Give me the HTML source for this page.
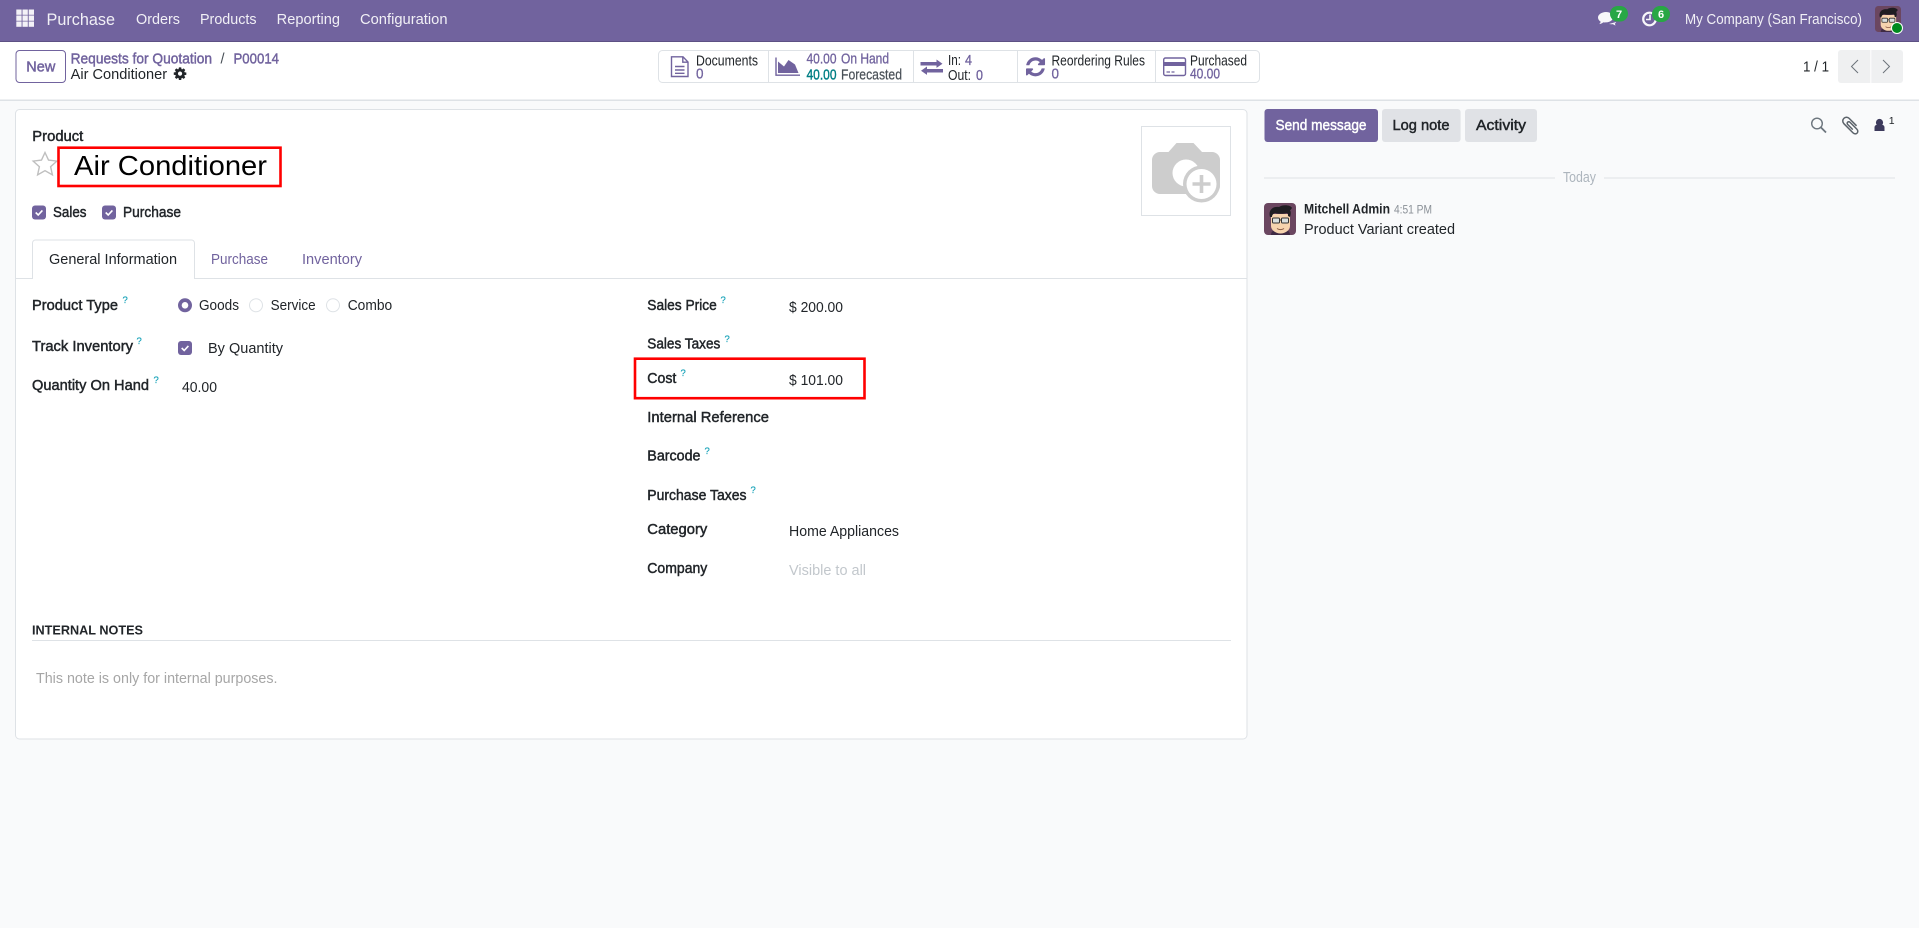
<!DOCTYPE html>
<html lang="en"><head><meta charset="utf-8"><title>Air Conditioner</title>
<style>
html,body{margin:0;padding:0;background:#f9fafb;width:1919px;height:928px;overflow:hidden}
svg{display:block}
text{font-family:"Liberation Sans",sans-serif;font-size:14.500px;fill:#212529;white-space:pre}
.m{stroke:#212529;stroke-width:.45}
.p{fill:#71639e;stroke:#71639e;stroke-width:.3}
.pm{fill:#71639e;stroke:#71639e;stroke-width:.45}
.n{fill:#fff;fill-opacity:.9}
.q{fill:#17a2b8;font-size:9.500px;stroke:#17a2b8;stroke-width:.2}
</style></head><body>
<svg width="1919" height="928" viewBox="0 0 1919 928" xmlns="http://www.w3.org/2000/svg">
<rect width="1919" height="928" fill="#f9fafb"/>
<!-- navbar -->
<rect width="1919" height="42" fill="#71639e"/>
<rect y="41" width="1919" height="1" fill="#5d5184"/>
<g fill="#f3f1f7">
<rect x="16.300" y="9.500" width="5.300" height="5.300"/><rect x="22.500" y="9.500" width="5.300" height="5.300"/><rect x="28.700" y="9.500" width="5.300" height="5.300"/>
<rect x="16.300" y="15.500" width="5.300" height="5.300"/><rect x="22.500" y="15.500" width="5.300" height="5.300"/><rect x="28.700" y="15.500" width="5.300" height="5.300"/>
<rect x="16.300" y="21.500" width="5.300" height="5.300"/><rect x="22.500" y="21.500" width="5.300" height="5.300"/><rect x="28.700" y="21.500" width="5.300" height="5.300"/>
</g>
<text class="n" x="46.500" y="25" style="font-size:17px" textLength="68.500" lengthAdjust="spacingAndGlyphs">Purchase</text>
<text class="n" x="136" y="24" textLength="44" lengthAdjust="spacingAndGlyphs">Orders</text>
<text class="n" x="200" y="24" textLength="56.500" lengthAdjust="spacingAndGlyphs">Products</text>
<text class="n" x="276.700" y="24" textLength="63.300" lengthAdjust="spacingAndGlyphs">Reporting</text>
<text class="n" x="360" y="24" textLength="87.500" lengthAdjust="spacingAndGlyphs">Configuration</text>
<!-- comments icon -->
<path d="M1606 12c-4.400 0-8 2.500-8 5.500 0 1.800 1.100 3.200 2.700 4.200-.2.900-.8 1.700-1.500 2.400 1.600-.2 3-.9 4-1.700.9.100 1.800.100 2.800 0 4.400-.2 7-2.500 7-5 0-3-3-5.400-7-5.400z" fill="#fff" fill-opacity=".95"/>
<path d="M1609 24c1.500.3 3 .2 4 .1 .8.700 1.700 1.100 2.700 1.300-.5-.6-.8-1.200-.9-1.800 .7-.5 1.200-1 1.400-1.600z" fill="#fff" fill-opacity=".95"/>
<rect x="1610" y="6" width="18" height="15.500" rx="7.700" fill="#28a745"/>
<text x="1619" y="18" text-anchor="middle" style="font-size:11px;fill:#fff;font-weight:700">7</text>
<!-- activity icon -->
<circle cx="1649.500" cy="19" r="6.300" fill="none" stroke="#fff" stroke-opacity=".95" stroke-width="2.200"/>
<path d="M1650 14.500v5h-4" fill="none" stroke="#fff" stroke-opacity=".95" stroke-width="1.600"/>
<rect x="1652" y="6" width="18" height="16" rx="8" fill="#28a745"/>
<text x="1661" y="18" text-anchor="middle" style="font-size:11px;fill:#fff;font-weight:700">6</text>
<text class="n" x="1685" y="24" textLength="177" lengthAdjust="spacingAndGlyphs">My Company (San Francisco)</text>
<!-- nav avatar -->
<g transform="translate(1875 6) scale(.8125)">
<rect width="32" height="32" rx="4" fill="#6b4660"/>
<path d="M7 32c0-3 2-5 5-5h9c3 0 5 2 5 5z" fill="#3f2b44"/>
<path d="M7 11h19v12c0 4-4.500 7.500-9.500 7.500S7 27 7 23z" fill="#f6d3ae"/>
<path d="M6 14C4 7 9 3 15 4c4-3 12-2 13 1-1 1-1 2-2 2 1 2 1 4 0 7l-2-1c0-2 0-2-1-3-4 1-9 1-12 0-2 1-3 2-3 4z" fill="#1f1d22"/>
<rect x="8.500" y="15" width="7" height="5" rx="1" fill="#d9dedd" stroke="#333" stroke-width="1"/>
<rect x="17.500" y="15" width="7" height="5" rx="1" fill="#d9dedd" stroke="#333" stroke-width="1"/>
<path d="M15.500 17h2" stroke="#333"/><path d="M13 25.500c2 1.500 5 1.500 7 0" stroke="#8a5a44" fill="none"/>
</g>
<circle cx="1897" cy="28" r="5.500" fill="#008a1e" stroke="#fff" stroke-width="1"/>
<!-- control panel -->
<rect y="42" width="1919" height="58" fill="#fff"/>
<rect y="99.500" width="1919" height="1.500" fill="#dee2e6"/>
<rect x="16" y="50.500" width="49.500" height="32" rx="3.500" fill="#fff" stroke="#71639e"/>
<text class="pm" x="26.300" y="71.300" textLength="29" lengthAdjust="spacingAndGlyphs">New</text>
<text class="pm" x="70.600" y="63.500" textLength="141.500" lengthAdjust="spacingAndGlyphs">Requests for Quotation</text>
<text x="220.500" y="63.500" style="fill:#495057">/</text>
<text class="pm" x="233.500" y="63.500" textLength="45.500" lengthAdjust="spacingAndGlyphs">P00014</text>
<text x="70.600" y="79" textLength="96.500" lengthAdjust="spacingAndGlyphs">Air Conditioner</text>
<path transform="translate(172.700 66.300) scale(.0082)" fill="#212529" fill-rule="evenodd" d="M1152 896q0-106-75-181t-181-75-181 75-75 181 75 181 181 75 181-75 75-181zm512-109v222q0 12-8 23t-20 13l-185 28q-19 54-39 91 35 50 107 138 10 12 10 25t-9 23q-27 37-99 108t-94 71q-12 0-26-9l-138-108q-44 23-91 38-16 136-29 186-7 28-36 28h-222q-14 0-24.500-8.500t-11.500-21.500l-28-184q-49-16-90-37l-141 107q-10 9-25 9-14 0-25-11-126-114-165-168-7-10-7-23 0-12 8-23 15-21 51-66.500t54-70.500q-27-50-41-99l-183-27q-13-2-21-12.500t-8-23.500v-222q0-12 8-23t19-13l186-28q14-46 39-92-40-57-107-138-10-12-10-24 0-10 9-23 26-36 98.500-107.500t94.500-71.500q13 0 26 10l138 107q44-23 91-38 16-136 29-186 7-28 36-28h222q14 0 24.500 8.500t11.500 21.500l28 184q49 16 90 37l142-107q9-9 24-9 13 0 25 10 129 119 165 170 7 8 7 22 0 12-8 23-15 21-51 66.500t-54 70.500q26 50 41 98l183 28q13 2 21 12.500t8 23.500z"/>
<!-- stat buttons -->
<rect x="658.500" y="50.500" width="601" height="32" rx="4" fill="#fff" stroke="#dee2e6"/>
<path d="M768.500 51v31M913.500 51v31M1017.500 51v31M1155.500 51v31" stroke="#dee2e6"/>
<path d="M671.500 56.800H683l5 5.200V76.500H671.500z M682.800 56.800V62.200H688 M675 66.500h9.500M675 70h9.500M675 73.300h9.500" fill="none" stroke="#71639e" stroke-width="1.400"/>
<text x="696" y="65.500" textLength="62" lengthAdjust="spacingAndGlyphs">Documents</text>
<text class="p" x="696" y="78.300" textLength="7.500" lengthAdjust="spacingAndGlyphs">0</text>
<path d="M776 57.500V75.200H800" fill="none" stroke="#71639e" stroke-width="1.400"/>
<path d="M778 73V61.500L784 66.500 788.500 60 795 64.500 798.500 73z" fill="#71639e"/>
<text class="p" x="806.500" y="63.500" textLength="30" lengthAdjust="spacingAndGlyphs">40.00</text>
<text class="p" x="841" y="63.500" textLength="48" lengthAdjust="spacingAndGlyphs">On Hand</text>
<text x="806.500" y="79.500" textLength="30" lengthAdjust="spacingAndGlyphs" style="fill:#017e84" stroke="#017e84" stroke-width=".4">40.00</text>
<text x="841" y="79.500" textLength="61" lengthAdjust="spacingAndGlyphs" style="fill:#495057;stroke:#495057;stroke-width:.2">Forecasted</text>
<path d="M920.500 62h16v-2.500l6 4.200-6 4.200V65.500h-16zM943 69h-16v-2.500l-6 4.200 6 4.200V72.500h16z" fill="#71639e"/>
<text x="948" y="65" textLength="13" lengthAdjust="spacingAndGlyphs">In:</text>
<text class="p" x="965" y="65" textLength="7" lengthAdjust="spacingAndGlyphs">4</text>
<text x="948" y="80" textLength="23" lengthAdjust="spacingAndGlyphs">Out:</text>
<text class="p" x="976" y="80" textLength="7" lengthAdjust="spacingAndGlyphs">0</text>
<path transform="translate(1024.400 55.700) scale(.0124)" fill="#71639e" d="M1639 1056q0 5-1 7-64 268-268 434.500t-478 166.500q-146 0-282.500-55t-243.500-157l-129 129q-19 19-45 19t-45-19-19-45v-448q0-26 19-45t45-19h448q26 0 45 19t19 45-19 45l-137 137q71 66 161 102t187 36q134 0 250-65t186-179q11-17 53-117 8-23 30-23h192q13 0 22.500 9.500t9.500 22.500zm25-800v448q0 26-19 45t-45 19h-448q-26 0-45-19t-19-45 19-45l138-138q-148-137-349-137-134 0-250 65t-186 179q-11 17-53 117-8 23-30 23h-199q-13 0-22.500-9.500t-9.500-22.500v-7q65-268 270-434.500t480-166.500q146 0 284 55.500t245 156.500l130-129q19-19 45-19t45 19 19 45z"/>
<text x="1051.500" y="65.500" textLength="93.500" lengthAdjust="spacingAndGlyphs">Reordering Rules</text>
<text class="p" x="1051.500" y="78.300" textLength="7.500" lengthAdjust="spacingAndGlyphs">0</text>
<rect x="1163.700" y="58" width="21.800" height="17.500" rx="1.800" fill="none" stroke="#71639e" stroke-width="1.400"/>
<rect x="1163.700" y="62" width="21.800" height="4" fill="#71639e"/>
<path d="M1166.500 72h3.500M1171.500 72h3" stroke="#71639e" stroke-width="1.300"/>
<text x="1190" y="65.500" textLength="57" lengthAdjust="spacingAndGlyphs">Purchased</text>
<text class="p" x="1190" y="78.300" textLength="30" lengthAdjust="spacingAndGlyphs">40.00</text>
<text x="1803" y="71.500" textLength="26" lengthAdjust="spacingAndGlyphs">1 / 1</text>
<rect x="1838" y="50" width="65" height="33" rx="3" fill="#eff0f1"/>
<rect x="1870.300" y="50" width="1" height="33" fill="#fff"/>
<path d="M1858 60l-6.500 6.500 6.500 6.500M1883 60l6.500 6.500-6.500 6.500" fill="none" stroke="#6c737a" stroke-width="1"/>
<!-- sheet -->
<rect x="15.500" y="109.500" width="1231.500" height="629.500" rx="4" fill="#fff" stroke="#dee2e6"/>
<text class="m" x="32.300" y="141" textLength="51" lengthAdjust="spacingAndGlyphs">Product</text>
<path d="M45 152.500l3.500 7.600 8.300 1-6.200 5.600 1.800 8.200-7.400-4.200-7.400 4.200 1.800-8.200-6.200-5.600 8.300-1z" fill="none" stroke="#bfbfbf" stroke-width="1.400"/>
<text x="74" y="175" style="font-size:28px;fill:#000" textLength="193" lengthAdjust="spacingAndGlyphs">Air Conditioner</text>
<rect x="58.500" y="147.700" width="222" height="38.300" fill="none" stroke="#f00" stroke-width="2.600"/>
<!-- image -->
<rect x="1141.500" y="126.500" width="89" height="89" fill="#fff" stroke="#dee2e6"/>
<path d="M1160 152h8.500l8-9h17l8.500 9h10a8 8 0 0 1 8 8v26a8 8 0 0 1-8 8h-52a8 8 0 0 1-8-8v-26a8 8 0 0 1 8-8z" fill="#cdcdcd"/>
<circle cx="1186" cy="173" r="13.500" fill="#fff"/>
<circle cx="1201.500" cy="184" r="18.500" fill="#cdcdcd"/>
<circle cx="1201.500" cy="184" r="15" fill="#fff"/>
<path d="M1201.500 175v18M1192.500 184h18" stroke="#cdcdcd" stroke-width="3.600"/>
<!-- sales / purchase checks -->
<rect x="32" y="205.500" width="14" height="14" rx="3" fill="#71639e"/><path d="M35.700 212.500l2.500 2.500 4.200-4.600" fill="none" stroke="#fff" stroke-width="1.600"/>
<text class="m" x="53" y="217" textLength="33.500" lengthAdjust="spacingAndGlyphs">Sales</text>
<rect x="102" y="205.500" width="14" height="14" rx="3" fill="#71639e"/><path d="M105.700 212.500l2.500 2.500 4.200-4.600" fill="none" stroke="#fff" stroke-width="1.600"/>
<text class="m" x="123" y="217" textLength="58" lengthAdjust="spacingAndGlyphs">Purchase</text>
<!-- tabs -->
<path d="M16 278.500H32.500V243a3 3 0 0 1 3-3H191.500a3 3 0 0 1 3 3v35.500H1247" fill="#fff" stroke="#dee2e6"/>
<text x="49" y="264" textLength="128" lengthAdjust="spacingAndGlyphs">General Information</text>
<text class="p" x="211" y="264" textLength="57" lengthAdjust="spacingAndGlyphs" style="stroke-width:0">Purchase</text>
<text class="p" x="302" y="264" textLength="60" lengthAdjust="spacingAndGlyphs" style="stroke-width:0">Inventory</text>
<!-- left col -->
<text class="m" x="32" y="310" textLength="86" lengthAdjust="spacingAndGlyphs">Product Type</text><text class="q" x="122.500" y="303">?</text>
<circle cx="185" cy="305.300" r="7" fill="#71639e"/><circle cx="185" cy="305.300" r="3.300" fill="#fff"/>
<text x="199" y="310" textLength="40" lengthAdjust="spacingAndGlyphs">Goods</text>
<circle cx="256" cy="305.300" r="6.500" fill="#fff" stroke="#dee2e6"/>
<text x="270.600" y="310" textLength="45" lengthAdjust="spacingAndGlyphs">Service</text>
<circle cx="333" cy="305.300" r="6.500" fill="#fff" stroke="#dee2e6"/>
<text x="347.700" y="310" textLength="44.500" lengthAdjust="spacingAndGlyphs">Combo</text>
<text class="m" x="32" y="351" textLength="101" lengthAdjust="spacingAndGlyphs">Track Inventory</text><text class="q" x="136.500" y="344">?</text>
<rect x="178" y="341" width="14" height="14" rx="3" fill="#71639e"/><path d="M181.700 348l2.500 2.500 4.200-4.600" fill="none" stroke="#fff" stroke-width="1.600"/>
<text x="208" y="353" textLength="75" lengthAdjust="spacingAndGlyphs">By Quantity</text>
<text class="m" x="32" y="390" textLength="117" lengthAdjust="spacingAndGlyphs">Quantity On Hand</text><text class="q" x="153.500" y="383">?</text>
<text x="182" y="392" textLength="35" lengthAdjust="spacingAndGlyphs">40.00</text>
<!-- right col -->
<text class="m" x="647.300" y="310" textLength="69.500" lengthAdjust="spacingAndGlyphs">Sales Price</text><text class="q" x="720.500" y="303">?</text>
<text x="789" y="312" textLength="54" lengthAdjust="spacingAndGlyphs">$ 200.00</text>
<text class="m" x="647.300" y="348.700" textLength="73" lengthAdjust="spacingAndGlyphs">Sales Taxes</text><text class="q" x="724.500" y="342">?</text>
<text class="m" x="647.300" y="383" textLength="29" lengthAdjust="spacingAndGlyphs">Cost</text><text class="q" x="680.500" y="376">?</text>
<text x="789" y="385" textLength="54" lengthAdjust="spacingAndGlyphs">$ 101.00</text>
<rect x="635" y="358.700" width="229.500" height="39.500" fill="none" stroke="#f00" stroke-width="2.600"/>
<text class="m" x="647.300" y="422" textLength="121.700" lengthAdjust="spacingAndGlyphs">Internal Reference</text>
<text class="m" x="647.300" y="460.700" textLength="53.200" lengthAdjust="spacingAndGlyphs">Barcode</text><text class="q" x="704.500" y="454">?</text>
<text class="m" x="647.300" y="500" textLength="99.200" lengthAdjust="spacingAndGlyphs">Purchase Taxes</text><text class="q" x="750.500" y="493">?</text>
<text class="m" x="647.300" y="534" textLength="60" lengthAdjust="spacingAndGlyphs">Category</text>
<text x="789" y="536" textLength="110" lengthAdjust="spacingAndGlyphs">Home Appliances</text>
<text class="m" x="647.300" y="573" textLength="60" lengthAdjust="spacingAndGlyphs">Company</text>
<text x="789" y="575" style="fill:#c2c7cc" textLength="77" lengthAdjust="spacingAndGlyphs">Visible to all</text>
<!-- notes -->
<text x="32" y="634.500" style="font-size:13px;font-weight:700" textLength="111" lengthAdjust="spacingAndGlyphs">INTERNAL NOTES</text>
<rect x="32" y="640" width="1199" height="1" fill="#dee2e6"/>
<text x="36" y="683" style="fill:#a6a6a6" textLength="241.500" lengthAdjust="spacingAndGlyphs">This note is only for internal purposes.</text>
<!-- chatter -->
<rect x="1264.500" y="109" width="113.500" height="33" rx="3" fill="#71639e"/>
<text x="1275.500" y="130" style="fill:#fff;stroke:#fff;stroke-width:.45" textLength="91" lengthAdjust="spacingAndGlyphs">Send message</text>
<rect x="1382" y="109" width="78.600" height="33" rx="3" fill="#e0e2e6"/>
<text class="m" x="1392.500" y="130" textLength="57" lengthAdjust="spacingAndGlyphs">Log note</text>
<rect x="1465" y="109" width="72" height="33" rx="3" fill="#e0e2e6"/>
<text class="m" x="1476" y="130" textLength="50" lengthAdjust="spacingAndGlyphs">Activity</text>
<circle cx="1817" cy="123.500" r="5.300" fill="none" stroke="#6c757d" stroke-width="1.400"/><path d="M1821 127.500l5 5" stroke="#6c757d" stroke-width="1.800"/>
<path transform="translate(1839.700 115) scale(.0118)" fill="#5c636a" d="M1596 1385q0 117-79 196t-196 79q-135 0-235-100l-777-776q-113-115-113-271 0-159 110-270t269-111q158 0 273 113l605 606q10 10 10 22 0 16-30.500 46.500t-46.500 30.500q-13 0-23-10l-606-607q-79-77-181-77-106 0-179 75t-73 181q0 105 76 181l776 777q63 63 145 63 64 0 106-42t42-106q0-82-63-145l-581-581q-26-24-60-24-29 0-48 19t-19 48q0 32 25 59l410 410q10 10 10 22 0 16-31 47t-47 31q-12 0-22-10l-410-410q-63-61-63-149 0-82 57-139t139-57q88 0 149 63l581 581q100 98 100 235z"/>
<circle cx="1879.500" cy="122.500" r="3.600" fill="#3d3a5c"/><path d="M1874.500 131v-3.500c0-2 1.500-2.800 3-2.800h4c1.500 0 3 .8 3 2.800V131z" fill="#3d3a5c"/>
<text x="1888.700" y="124" style="font-size:10.500px">1</text>
<rect x="1264" y="177.500" width="291" height="1" fill="#dee2e6"/>
<rect x="1604" y="177.500" width="291" height="1" fill="#dee2e6"/>
<text x="1563" y="182" style="fill:#adb5bd" textLength="33" lengthAdjust="spacingAndGlyphs">Today</text>
<g transform="translate(1264 203)">
<rect width="32" height="32" rx="4" fill="#6b4660"/>
<path d="M7 32c0-3 2-5 5-5h9c3 0 5 2 5 5z" fill="#3f2b44"/>
<path d="M7 11h19v12c0 4-4.500 7.500-9.500 7.500S7 27 7 23z" fill="#f6d3ae"/>
<path d="M6 14C4 7 9 3 15 4c4-3 12-2 13 1-1 1-1 2-2 2 1 2 1 4 0 7l-2-1c0-2 0-2-1-3-4 1-9 1-12 0-2 1-3 2-3 4z" fill="#1f1d22"/>
<rect x="8.500" y="15" width="7" height="5" rx="1" fill="#d9dedd" stroke="#333" stroke-width="1"/>
<rect x="17.500" y="15" width="7" height="5" rx="1" fill="#d9dedd" stroke="#333" stroke-width="1"/>
<path d="M15.500 17h2" stroke="#333"/><path d="M13 25.500c2 1.500 5 1.500 7 0" stroke="#8a5a44" fill="none"/>
</g>
<text x="1304" y="213.500" style="font-weight:700;font-size:13.500px" textLength="86" lengthAdjust="spacingAndGlyphs">Mitchell Admin</text>
<text x="1394" y="213.500" style="fill:#8a9097;font-size:12px" textLength="38" lengthAdjust="spacingAndGlyphs">4:51 PM</text>
<text x="1304" y="234" textLength="151" lengthAdjust="spacingAndGlyphs">Product Variant created</text>
</svg>
</body></html>
